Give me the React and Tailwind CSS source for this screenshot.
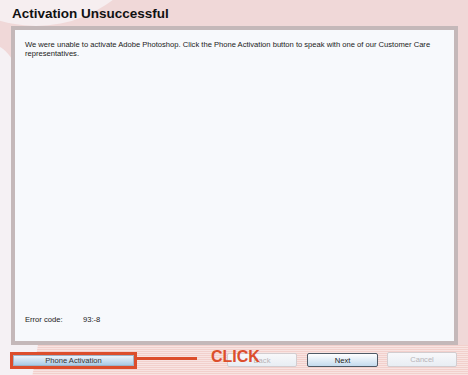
import React from "react";

export default function App() {
  const body = { fontFamily: '"Liberation Sans", Arial, sans-serif' };
  return (
    <div
      className="relative w-[468px] h-[375px] overflow-hidden bg-[#f0d8d8]"
      style={body}
    >
      {/* decorative background shapes */}
      <div className="absolute left-0 top-[345px] w-[468px] h-[30px] bg-[repeating-linear-gradient(180deg,#f2d0cc_0px,#f2d0cc_1px,#f8e4e2_1px,#f8e4e2_2px)]" />
      <div className="absolute left-[-90px] top-[-226px] w-[252px] h-[252px] rounded-full bg-[#f6eef0]" />
      <div className="absolute left-[-60px] top-[45px] w-[105px] h-[400px] rounded-[50%] bg-[#f5f1f4]" />

      <div className="relative flex flex-col">
        <div className="pl-[12px] pt-[7px] text-[13.5px] leading-[14px] font-bold text-[#111]">
          Activation Unsuccessful
        </div>

        <div className="ml-[11px] mt-[5px] w-[447px] h-[319px] border-4 border-[#c4b8b9] bg-[#f7f9fc] flex flex-col justify-between">
          <p className="pl-[10px] pt-[10px] w-[430px] text-[7.6px] leading-[9px] text-[#1a1a1a]">
            We were unable to activate Adobe Photoshop. Click the Phone Activation
            button to speak with one of our Customer Care representatives.
          </p>
          <div className="pl-[10px] pb-[17px] flex text-[7.6px] leading-[9px] text-[#1a1a1a]">
            <span className="w-[58px]">Error code:</span>
            <span>93:-8</span>
          </div>
        </div>

        <div className="flex items-start pt-[7px] h-[30px]">
          <div className="ml-[10px] w-[127px] h-[17px] border-[3px] border-[#dc4e2c] flex">
            <button className="flex-1 flex items-center justify-center bg-gradient-to-b from-[#eef4fa] to-[#a9cbe6] border border-[#9fb4c8] text-[7.6px] leading-[9px] text-[#333]">
              Phone Activation
            </button>
          </div>
          <button className="ml-[90px] mt-[1px] w-[70px] h-[14px] flex items-center justify-center rounded-[2px] border border-[#d2cdd0] bg-gradient-to-b from-[#f8f8fa] to-[#e8eef4] text-[7.6px] leading-[9px] text-[#b8b4b8]">
            Back
          </button>
          <button className="ml-[10px] mt-[1px] w-[71px] h-[14px] flex items-center justify-center rounded-[2px] border border-[#4e5a66] bg-gradient-to-b from-[#ffffff] to-[#c4dbee] text-[7.6px] leading-[9px] text-[#1a1a1a]">
            Next
          </button>
          <button className="ml-[9px] w-[70px] h-[15px] flex items-center justify-center rounded-[2px] border border-[#d2cdd0] bg-gradient-to-b from-[#f8f8fa] to-[#e8eef4] text-[7.6px] leading-[9px] text-[#b8b4b8]">
            Cancel
          </button>
        </div>
      </div>

      {/* annotation overlay */}
      <div className="absolute left-[137px] top-[357px] w-[60px] h-[3px] bg-[#dc4e2c]" />
      <div className="absolute left-[211px] top-[349px] text-[16px] leading-[16px] font-bold text-[#dc4e2c]">
        CLICK
      </div>
    </div>
  );
}
